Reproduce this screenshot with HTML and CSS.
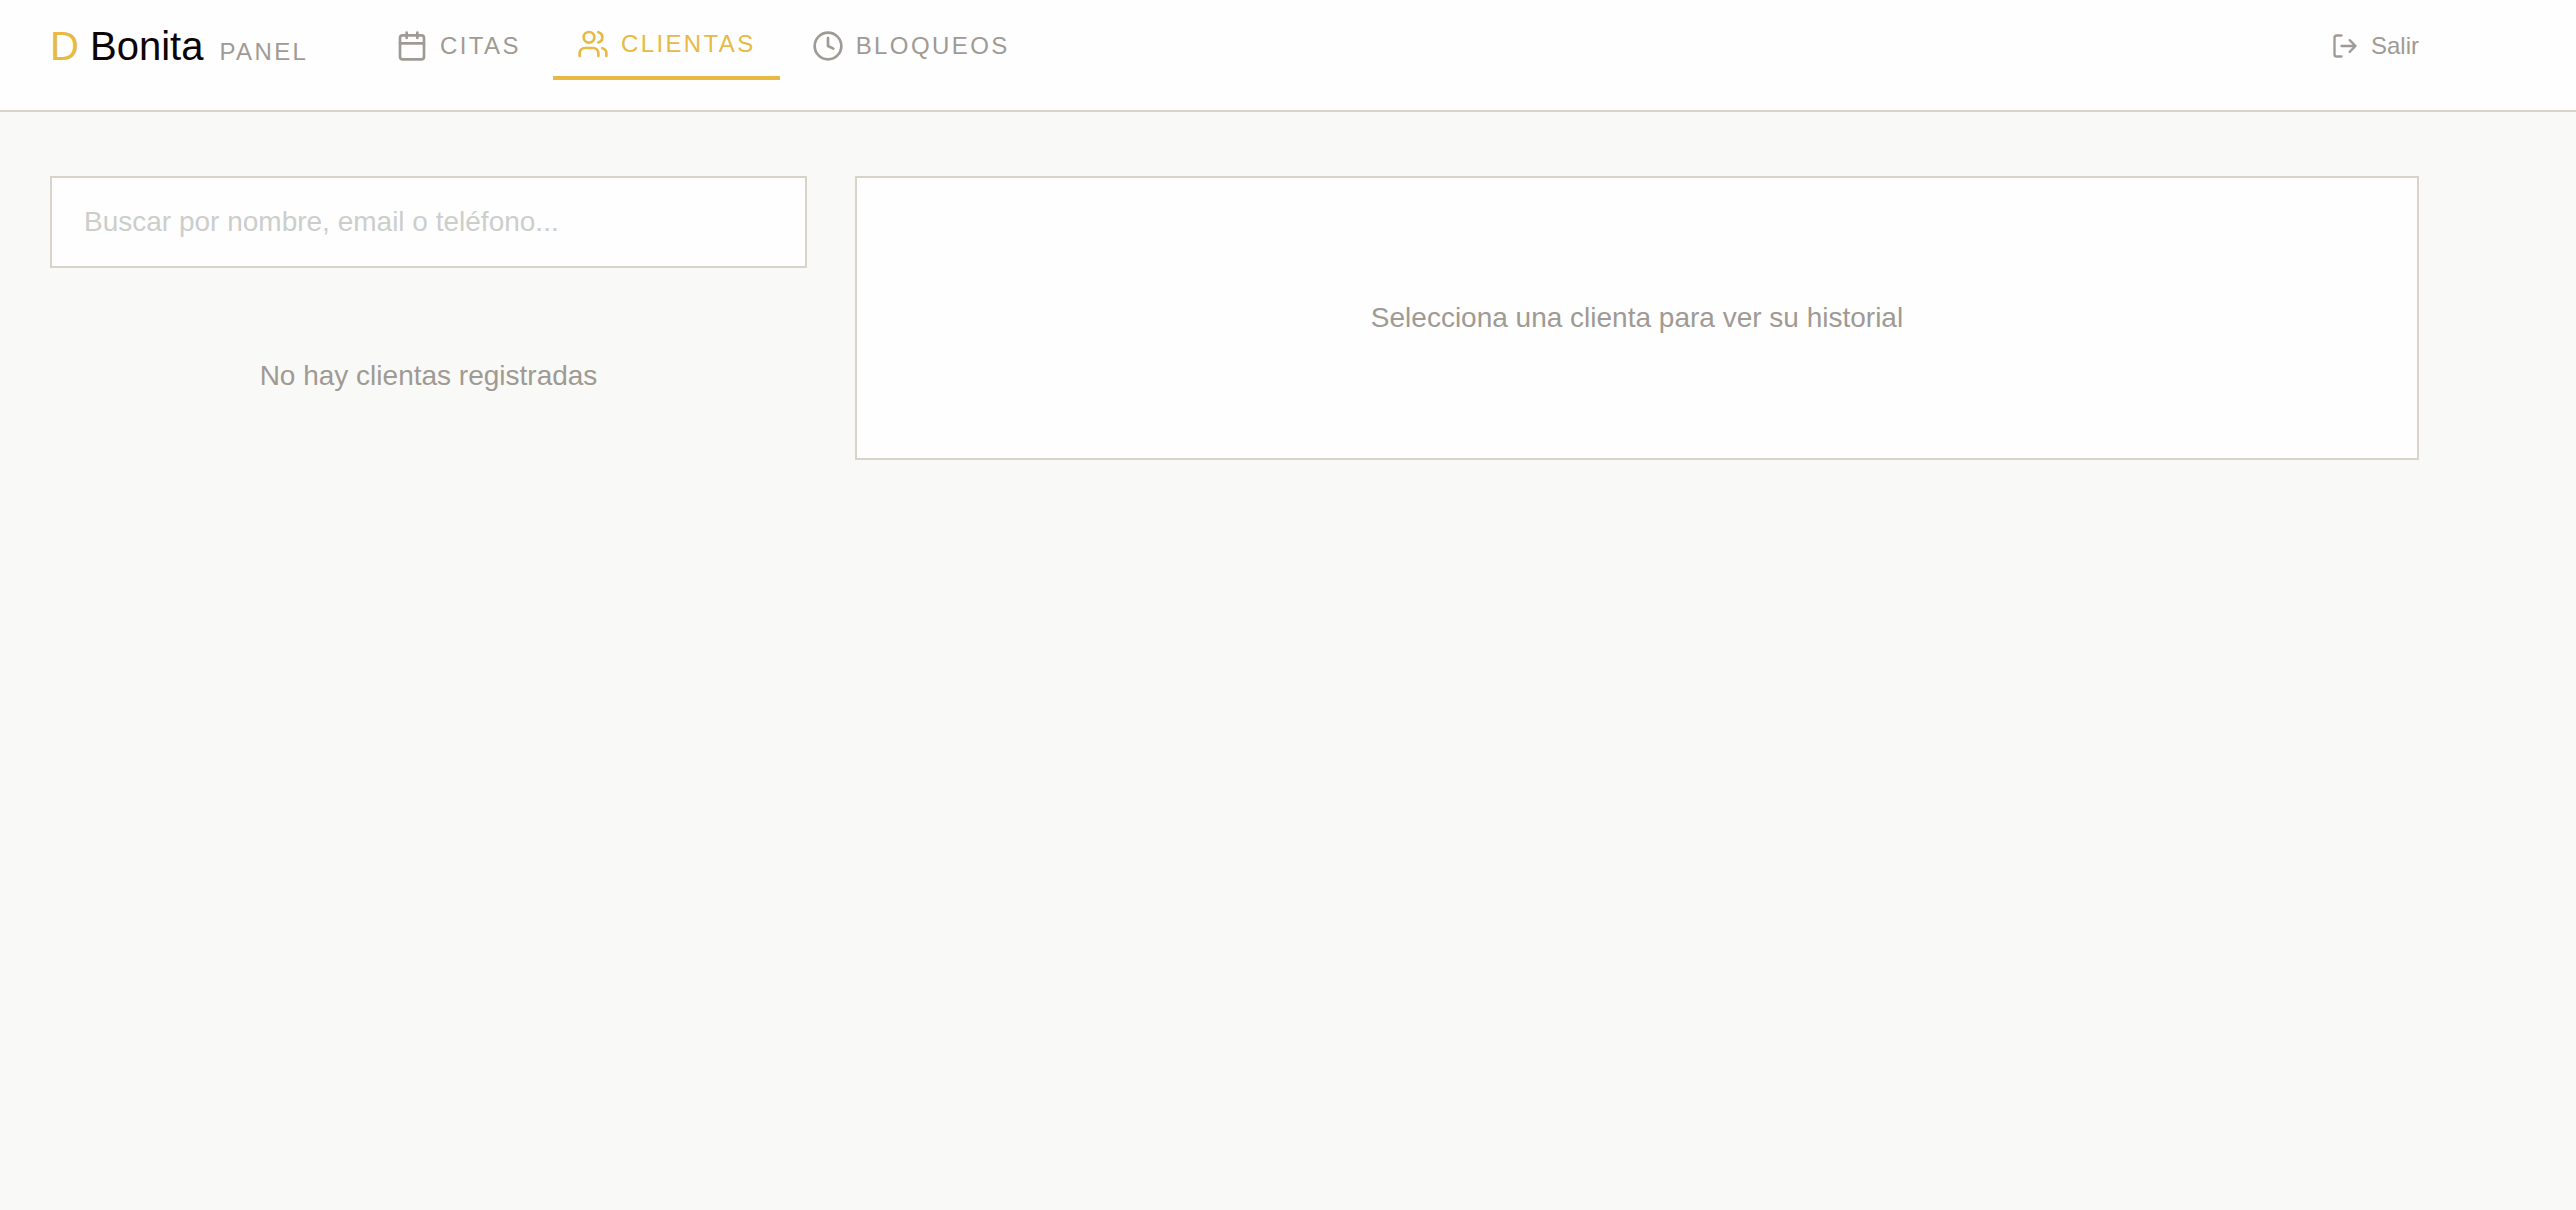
FILE: index.html
```html
<!DOCTYPE html>
<html lang="es">
<head>
<meta charset="utf-8">
<title>D Bonita Panel</title>
<link rel="stylesheet" href="styles.css">
</head>
<body>
<header class="header">
  <div class="logo"><span class="logo-name"><span class="logo-accent">D</span> Bonita</span><span class="logo-tag">PANEL</span></div>
  <nav class="nav">
    <a class="nav-item">
      <svg class="icon" viewBox="0 0 24 24"><rect x="3" y="4" width="18" height="18" rx="2"/><path d="M16 2v4M8 2v4M3 10h18"/></svg>
      <span>CITAS</span>
    </a>
    <a class="nav-item active">
      <svg class="icon" viewBox="0 0 24 24"><path d="M16 21v-2a4 4 0 0 0-4-4H6a4 4 0 0 0-4 4v2"/><circle cx="9" cy="7" r="4"/><path d="M22 21v-2a4 4 0 0 0-3-3.87M16 3.13a4 4 0 0 1 0 7.75"/></svg>
      <span>CLIENTAS</span>
    </a>
    <a class="nav-item">
      <svg class="icon" viewBox="0 0 24 24"><circle cx="12" cy="12" r="10"/><path d="M12 6v6l4 2"/></svg>
      <span>BLOQUEOS</span>
    </a>
  </nav>
  <button class="logout">
    <svg class="icon icon-small" viewBox="0 0 24 24"><path d="M9 21H5a2 2 0 0 1-2-2V5a2 2 0 0 1 2-2h4M16 17l5-5-5-5M21 12H9"/></svg>
    <span>Salir</span>
  </button>
</header>
<main class="content">
  <section class="clients">
    <input class="search" type="text" placeholder="Buscar por nombre, email o teléfono...">
    <p class="empty">No hay clientas registradas</p>
  </section>
  <section class="detail">Selecciona una clienta para ver su historial</section>
</main>
</body>
</html>
```
FILE: styles.css
```css
* {
  box-sizing: border-box;
}

body {
  margin: 0;
  min-height: 100vh;
  background: #f9f9f7;
  color: #a09a94;
  font-family: "Liberation Sans", Arial, sans-serif;
  font-size: 28px;
}

.header {
  display: flex;
  align-items: center;
  height: 112px;
  padding: 12px 157px 30px 50px;
  background: #fefefe;
  border-bottom: 2px solid #d8d4c8;
}

.logo {
  display: flex;
  align-items: baseline;
  gap: 16px;
  width: 322px;
}

.logo-name {
  color: #0c0406;
  font-size: 40px;
}

.logo-accent {
  color: #e8b943;
}

.logo-tag {
  font-size: 24px;
  letter-spacing: 2.4px;
}

.nav {
  display: flex;
  align-items: center;
  gap: 8px;
}

.nav-item {
  display: flex;
  align-items: center;
  gap: 12px;
  padding: 16px 24px;
  font-size: 24px;
  line-height: 32px;
  letter-spacing: 2.4px;
}

.nav-item.active {
  color: #e8b943;
  border-bottom: 4px solid #e8b943;
}

.icon {
  width: 32px;
  height: 32px;
  fill: none;
  stroke: currentColor;
  stroke-width: 2;
  stroke-linecap: round;
  stroke-linejoin: round;
}

.icon-small {
  width: 28px;
  height: 28px;
}

.logout {
  display: flex;
  align-items: center;
  gap: 12px;
  margin-left: auto;
  padding: 0;
  border: 0;
  background: none;
  color: inherit;
  font: inherit;
  font-size: 24px;
}

.content {
  display: grid;
  grid-template-columns: 757px 1fr;
  align-items: start;
  gap: 48px;
  padding: 64px 157px 0 50px;
}

.search {
  display: block;
  width: 100%;
  height: 92px;
  padding: 0 32px;
  border: 2px solid #d8d4c8;
  border-radius: 0;
  outline: none;
  background: #fefefe;
  font: inherit;
}

.search::placeholder {
  color: #cccecb;
  opacity: 1;
}

.empty {
  margin: 88px 0 0;
  line-height: 40px;
  text-align: center;
}

.detail {
  display: flex;
  align-items: center;
  justify-content: center;
  height: 284px;
  border: 2px solid #d8d4c8;
  background: #fefefe;
}
```
